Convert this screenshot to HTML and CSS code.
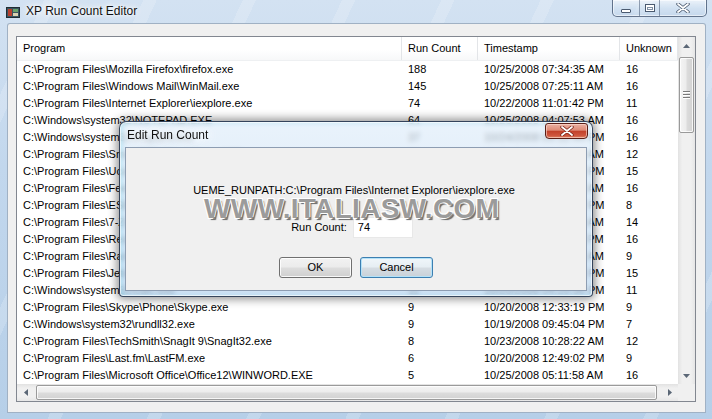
FILE: index.html
```html
<!DOCTYPE html>
<html>
<head>
<meta charset="utf-8">
<title>XP Run Count Editor</title>
<link rel="stylesheet" href="styles.css">
</head>
<body>
<div class="window">
  <div class="titlebar">
    <svg class="app-icon" width="14" height="12" viewBox="0 0 14 12">
      <rect x="0.5" y="1.5" width="13" height="10" fill="#3c5560" stroke="#1f2d33"/>
      <rect x="2" y="3" width="4" height="7" fill="#b8402e"/>
      <rect x="7" y="3" width="5" height="3" fill="#6aa36a"/>
      <rect x="7" y="7" width="5" height="3" fill="#d9d2b0"/>
    </svg>
    <span class="title">XP Run Count Editor</span>
    <div class="controls">
      <div class="ctl ctl-min"><span class="glyph-min"></span></div>
      <div class="ctl ctl-max"><span class="glyph-max"></span></div>
      <div class="ctl ctl-close">
        <svg width="14" height="10" viewBox="0 0 14 10"><path d="M2 1 L12 9 M12 1 L2 9" stroke="#4a5a70" stroke-width="3.4" stroke-linecap="round"/><path d="M2 1 L12 9 M12 1 L2 9" stroke="#fff" stroke-width="1.8" stroke-linecap="round"/></svg>
      </div>
    </div>
  </div>
  <div class="client">
    <div class="listview">
      <div class="lv-content">
        <div class="lv-header">
          <div class="cell c-prog">Program</div>
          <div class="cell c-count">Run Count</div>
          <div class="cell c-time">Timestamp</div>
          <div class="cell c-unk">Unknown</div>
        </div>
        <div class="lv-row"><div class="cell c-prog">C:\Program Files\Mozilla Firefox\firefox.exe</div><div class="cell c-count">188</div><div class="cell c-time">10/25/2008 07:34:35 AM</div><div class="cell c-unk">16</div></div>
        <div class="lv-row"><div class="cell c-prog">C:\Program Files\Windows Mail\WinMail.exe</div><div class="cell c-count">145</div><div class="cell c-time">10/25/2008 07:25:11 AM</div><div class="cell c-unk">16</div></div>
        <div class="lv-row"><div class="cell c-prog">C:\Program Files\Internet Explorer\iexplore.exe</div><div class="cell c-count">74</div><div class="cell c-time">10/22/2008 11:01:42 PM</div><div class="cell c-unk">11</div></div>
        <div class="lv-row"><div class="cell c-prog">C:\Windows\system32\NOTEPAD.EXE</div><div class="cell c-count">64</div><div class="cell c-time">10/25/2008 04:07:53 AM</div><div class="cell c-unk">16</div></div>
        <div class="lv-row"><div class="cell c-prog">C:\Windows\system32\mspaint.exe</div><div class="cell c-count">37</div><div class="cell c-time">10/24/2008 09:12:44 PM</div><div class="cell c-unk">16</div></div>
        <div class="lv-row"><div class="cell c-prog">C:\Program Files\SmartFTP Client\SmartFTP.exe</div><div class="cell c-count">31</div><div class="cell c-time">10/25/2008 06:51:20 AM</div><div class="cell c-unk">12</div></div>
        <div class="lv-row"><div class="cell c-prog">C:\Program Files\Ucancam\Ucancam.exe</div><div class="cell c-count">28</div><div class="cell c-time">10/21/2008 03:44:10 PM</div><div class="cell c-unk">15</div></div>
        <div class="lv-row"><div class="cell c-prog">C:\Program Files\FeedDemon\FeedDemon.exe</div><div class="cell c-count">25</div><div class="cell c-time">10/25/2008 06:02:33 AM</div><div class="cell c-unk">16</div></div>
        <div class="lv-row"><div class="cell c-prog">C:\Program Files\ESET\ESET Smart Security\egui.exe</div><div class="cell c-count">22</div><div class="cell c-time">10/18/2008 08:15:27 PM</div><div class="cell c-unk">8</div></div>
        <div class="lv-row"><div class="cell c-prog">C:\Program Files\7-Zip\7zFM.exe</div><div class="cell c-count">19</div><div class="cell c-time">10/24/2008 10:36:09 AM</div><div class="cell c-unk">14</div></div>
        <div class="lv-row"><div class="cell c-prog">C:\Program Files\Real\RealPlayer\realplay.exe</div><div class="cell c-count">17</div><div class="cell c-time">10/24/2008 11:20:48 PM</div><div class="cell c-unk">16</div></div>
        <div class="lv-row"><div class="cell c-prog">C:\Program Files\Rarlab\WinRAR.exe</div><div class="cell c-count">15</div><div class="cell c-time">10/19/2008 10:05:51 AM</div><div class="cell c-unk">9</div></div>
        <div class="lv-row"><div class="cell c-prog">C:\Program Files\Jetico\BestCrypt.exe</div><div class="cell c-count">12</div><div class="cell c-time">10/22/2008 07:58:13 PM</div><div class="cell c-unk">15</div></div>
        <div class="lv-row"><div class="cell c-prog">C:\Windows\system32\calc.exe</div><div class="cell c-count">11</div><div class="cell c-time">10/20/2008 04:29:36 PM</div><div class="cell c-unk">11</div></div>
        <div class="lv-row"><div class="cell c-prog">C:\Program Files\Skype\Phone\Skype.exe</div><div class="cell c-count">9</div><div class="cell c-time">10/20/2008 12:33:19 PM</div><div class="cell c-unk">9</div></div>
        <div class="lv-row"><div class="cell c-prog">C:\Windows\system32\rundll32.exe</div><div class="cell c-count">9</div><div class="cell c-time">10/19/2008 09:45:04 PM</div><div class="cell c-unk">7</div></div>
        <div class="lv-row"><div class="cell c-prog">C:\Program Files\TechSmith\SnagIt 9\SnagIt32.exe</div><div class="cell c-count">8</div><div class="cell c-time">10/23/2008 10:28:22 AM</div><div class="cell c-unk">12</div></div>
        <div class="lv-row"><div class="cell c-prog">C:\Program Files\Last.fm\LastFM.exe</div><div class="cell c-count">6</div><div class="cell c-time">10/20/2008 12:49:02 PM</div><div class="cell c-unk">9</div></div>
        <div class="lv-row"><div class="cell c-prog">C:\Program Files\Microsoft Office\Office12\WINWORD.EXE</div><div class="cell c-count">5</div><div class="cell c-time">10/25/2008 05:11:58 AM</div><div class="cell c-unk">16</div></div>
      </div>
      <div class="vscroll">
        <div class="sb-btn"><svg width="7" height="4" viewBox="0 0 7 4"><polygon points="0,4 7,4 3.5,0" fill="#5b6776"/></svg></div>
        <div class="vtrack">
          <div class="vthumb"><span class="grip-h"></span><span class="grip-h"></span><span class="grip-h"></span></div>
        </div>
        <div class="sb-btn"><svg width="7" height="4" viewBox="0 0 7 4"><polygon points="0,0 7,0 3.5,4" fill="#5b6776"/></svg></div>
      </div>
      <div class="hscroll">
        <div class="sb-btn"><svg width="4" height="7" viewBox="0 0 4 7"><polygon points="4,0 4,7 0,3.5" fill="#5b6776"/></svg></div>
        <div class="htrack"><div class="hthumb"></div></div>
        <div class="sb-btn"><svg width="4" height="7" viewBox="0 0 4 7"><polygon points="0,0 0,7 4,3.5" fill="#5b6776"/></svg></div>
      </div>
      <div class="corner"></div>
    </div>
  </div>

  <div class="dialog">
    <div class="dlg-titlebar">
      <span class="dlg-title">Edit Run Count</span>
      <div class="dlg-close">
        <svg width="14" height="10" viewBox="0 0 14 10"><path d="M2 1 L12 9 M12 1 L2 9" stroke="#7a2418" stroke-width="3.4" stroke-linecap="round"/><path d="M2 1 L12 9 M12 1 L2 9" stroke="#fff" stroke-width="1.8" stroke-linecap="round"/></svg>
      </div>
    </div>
    <div class="dlg-client">
      <div class="dlg-path">UEME_RUNPATH:C:\Program Files\Internet Explorer\iexplore.exe</div>
      <div class="dlg-field">
        <span class="dlg-label">Run Count:</span>
        <span class="dlg-input">74</span>
      </div>
      <div class="dlg-buttons">
        <span class="btn">OK</span>
        <span class="btn btn-focus">Cancel</span>
      </div>
      <div class="watermark">WWW.ITALIASW.COM</div>
    </div>
  </div>
</div>
</body>
</html>
```
FILE: styles.css
```css
* { box-sizing: border-box; }
html, body { margin: 0; padding: 0; }
body {
  width: 712px;
  height: 419px;
  overflow: hidden;
  font-family: "Liberation Sans", Arial, sans-serif;
  font-size: 11px;
  color: #000;
}

.window {
  position: relative;
  width: 712px;
  height: 419px;
  display: flex;
  flex-direction: column;
  padding: 0 6px 8px 7px;
  background:
    repeating-linear-gradient(115deg, rgba(255,255,255,0) 0 40px, rgba(255,255,255,0.18) 40px 52px, rgba(255,255,255,0) 52px 90px),
    linear-gradient(180deg, #d3e2f2 0%, #c2d7ed 40%, #b6cfe8 100%);
}

.titlebar {
  height: 23px;
  display: flex;
  align-items: flex-start;
  flex: none;
}
.app-icon { margin: 6px 0 0 -1px; flex: none; }
.title {
  margin: 3px 0 0 6px;
  font-size: 12px;
  line-height: 16px;
  color: #111;
  text-shadow: 0 0 6px #fff, 0 0 10px #fff, 0 0 3px #fff;
}
.controls {
  margin-left: auto;
  margin-right: -1px;
  display: flex;
  height: 17px;
  border: 1px solid rgba(55, 75, 105, 0.75);
  border-top: none;
  border-radius: 0 0 5px 5px;
  overflow: hidden;
  background: linear-gradient(180deg, rgba(255,255,255,0.55), rgba(210,226,242,0.4) 50%, rgba(185,208,232,0.5));
  box-shadow: inset 0 0 0 1px rgba(255,255,255,0.55);
}
.ctl {
  display: flex;
  align-items: center;
  justify-content: center;
  height: 100%;
}
.ctl-min { width: 27px; border-right: 1px solid rgba(55, 75, 105, 0.5); }
.ctl-max { width: 20px; border-right: 1px solid rgba(55, 75, 105, 0.5); }
.ctl-close { width: 46px; }
.glyph-min {
  width: 10px; height: 4px; margin-top: 6px;
  background: #fff;
  border: 1px solid #4a5a70;
  border-radius: 1px;
}
.glyph-max {
  width: 10px; height: 8px;
  border: 1px solid #4a5a70;
  background: #fff;
  position: relative;
}
.glyph-max::after {
  content: "";
  position: absolute;
  left: 1px; top: 2px; right: 1px; bottom: 1px;
  border: 1px solid #8090a5;
}

.client {
  flex: 1;
  display: flex;
  background: #f0f0f0;
  border: 1px solid rgba(95, 125, 160, 0.55);
  border-radius: 3px 3px 0 0;
  padding: 12px 9px 10px 8px;
}

.listview {
  flex: 1;
  display: grid;
  grid-template-columns: 1fr 17px;
  grid-template-rows: 1fr 17px;
  border: 1px solid #828790;
  background: #fff;
  overflow: hidden;
}
.lv-content { overflow: hidden; }
.lv-header {
  display: flex;
  height: 24px;
  background: linear-gradient(180deg, #ffffff 0%, #ffffff 55%, #f7f8f9 100%);
  border-bottom: 1px solid #eef0f2;
}
.lv-header .cell {
  line-height: 23px;
  border-right: 1px solid #e3e5e8;
}
.lv-row { display: flex; height: 17px; }
.lv-row .cell { line-height: 17px; }
.cell {
  padding-left: 6px;
  white-space: nowrap;
  overflow: hidden;
  flex: none;
}
.c-prog { width: 385px; }
.c-count { width: 76px; }
.c-time { width: 142px; }
.c-unk { width: 58px; }

.vscroll {
  grid-column: 2;
  grid-row: 1;
  display: flex;
  flex-direction: column;
  background: linear-gradient(90deg, #e2e2e2, #f0f0f0 25%, #f0f0f0 75%, #e6e6e6);
}
.sb-btn {
  width: 17px;
  height: 17px;
  flex: none;
  display: flex;
  align-items: center;
  justify-content: center;
}
.vtrack { flex: 1; padding: 3px 1px 0 1px; }
.vthumb {
  height: 76px;
  border: 1px solid #9a9a9a;
  border-radius: 2px;
  background: linear-gradient(90deg, #f4f4f4 0%, #ececec 48%, #dcdcdc 52%, #d2d2d2 100%);
  box-shadow: inset 0 0 0 1px rgba(255,255,255,0.8);
  display: flex;
  flex-direction: column;
  align-items: center;
  justify-content: center;
  gap: 1px;
}
.grip-h {
  width: 7px;
  height: 2px;
  border-top: 1px solid #7a7a7a;
  border-bottom: 1px solid #fff;
}

.hscroll {
  grid-column: 1;
  grid-row: 2;
  display: flex;
  background: linear-gradient(180deg, #e2e2e2, #f0f0f0 25%, #f0f0f0 75%, #e6e6e6);
}
.htrack { flex: 1; display: flex; padding: 1px 4px 1px 2px; }
.hthumb {
  flex: 1;
  border: 1px solid #9a9a9a;
  border-radius: 2px;
  background: linear-gradient(180deg, #f4f4f4 0%, #ececec 48%, #dcdcdc 52%, #d2d2d2 100%);
  box-shadow: inset 0 0 0 1px rgba(255,255,255,0.8);
}
.corner { grid-column: 2; grid-row: 2; background: #f0f0f0; }

/* Dialog (modal, floats over the list) */
.dialog {
  position: absolute;
  left: 119px;
  top: 121px;
  width: 474px;
  height: 176px;
  display: flex;
  flex-direction: column;
  padding: 0 5px 5px 5px;
  border: 1px solid rgba(25, 40, 65, 0.85);
  border-radius: 7px 7px 4px 4px;
  background: linear-gradient(180deg, rgba(225,238,250,0.72) 0%, rgba(190,215,240,0.72) 100%);
  backdrop-filter: blur(2.5px);
  box-shadow: 0 0 10px 2px rgba(0, 0, 0, 0.45), inset 0 0 0 1px rgba(255,255,255,0.65), inset 2px 0 6px rgba(90, 200, 230, 0.35);
}
.dlg-titlebar {
  height: 25px;
  display: flex;
  align-items: flex-start;
  flex: none;
}
.dlg-title {
  margin: 5px 0 0 2px;
  font-size: 12px;
  line-height: 16px;
  color: #111;
  text-shadow: 0 0 6px #fff, 0 0 10px #fff;
}
.dlg-close {
  margin-left: auto;
  margin-right: -1px;
  margin-top: 1px;
  width: 43px;
  height: 16px;
  border: 1px solid #5a1e16;
  border-radius: 3px 3px 4px 4px;
  background: linear-gradient(180deg, #eab1a3 0%, #dd8a76 45%, #c2402a 50%, #cf5840 85%, #e08d6d 100%);
  box-shadow: inset 0 0 0 1px rgba(255,220,210,0.6);
  display: flex;
  align-items: center;
  justify-content: center;
}
.dlg-client {
  position: relative;
  flex: 1;
  background: #f0f0f0;
  border: 1px solid #8d9db2;
  display: flex;
  flex-direction: column;
  align-items: center;
}
.dlg-path {
  margin-top: 34px;
  line-height: 16px;
  margin-right: 4px;
}
.dlg-field {
  margin-top: 19px;
  margin-right: 8px;
  display: flex;
  align-items: center;
  gap: 6px;
}
.dlg-label { line-height: 21px; }
.dlg-input {
  width: 60px;
  height: 21px;
  background: #fff;
  border: 1px solid #e8e8e8;
  padding-left: 4px;
  line-height: 19px;
}
.dlg-buttons {
  margin-top: 19px;
  display: flex;
  gap: 8px;
}
.btn {
  width: 73px;
  height: 21px;
  border: 1px solid #707070;
  border-radius: 3px;
  background: linear-gradient(180deg, #f2f2f2 0%, #ebebeb 48%, #dddddd 52%, #cfcfcf 100%);
  box-shadow: inset 0 0 0 1px rgba(255,255,255,0.85);
  text-align: center;
  line-height: 19px;
}
.btn-focus {
  border-color: #3c7fb1;
  box-shadow: inset 0 0 0 1px #b4e2f8;
  background: linear-gradient(180deg, #f0f6fa 0%, #e6eef3 48%, #d6dde3 52%, #c9d1d8 100%);
}
.watermark {
  position: absolute;
  left: 78px;
  top: 47px;
  font-family: "Liberation Sans", Arial, sans-serif;
  font-weight: bold;
  font-size: 28px;
  line-height: 28px;
  letter-spacing: 0.3px;
  color: #9b9b9b;
  white-space: nowrap;
  text-shadow: -1px -1px 0 #fff, 1px -1px 0 #fff, -1px 1px 0 #fff, 1px 1px 0 #8a8a8a, 2px 2px 1px #666;
}
```
